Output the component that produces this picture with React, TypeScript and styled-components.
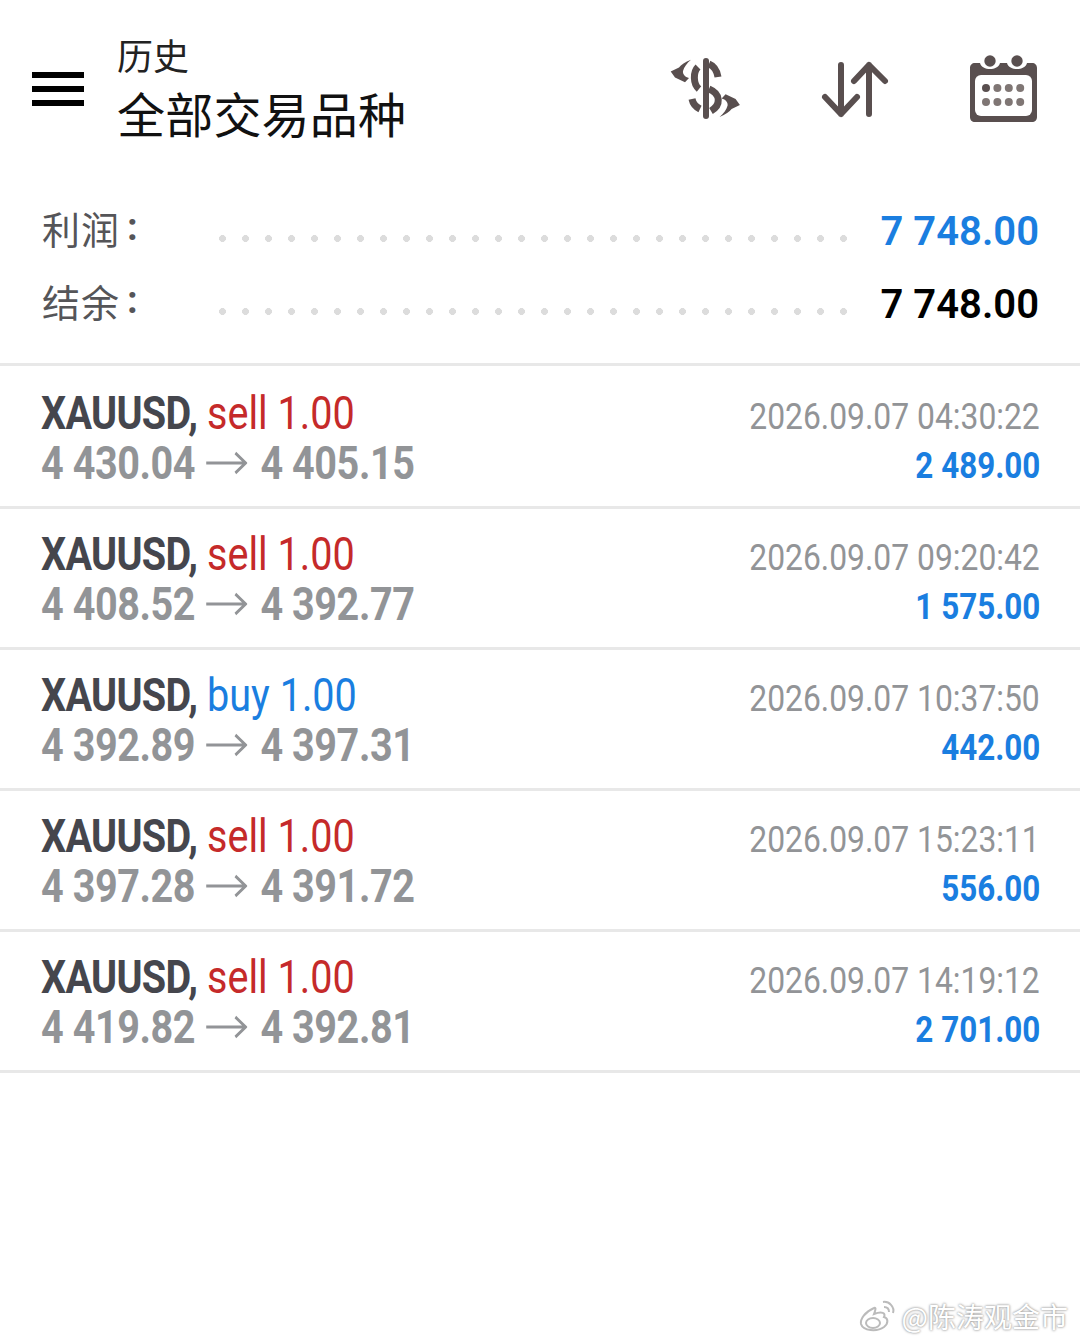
import styled, { createGlobalStyle } from "styled-components"

interface Deal {
    side: "sell" | "buy"
    open: string
    close: string
    time: string
    profit: string
}

const deals: Deal[] = [
    { side: "sell", open: "4 430.04", close: "4 405.15", time: "2026.09.07 04:30:22", profit: "2 489.00" },
    { side: "sell", open: "4 408.52", close: "4 392.77", time: "2026.09.07 09:20:42", profit: "1 575.00" },
    { side: "buy", open: "4 392.89", close: "4 397.31", time: "2026.09.07 10:37:50", profit: "442.00" },
    { side: "sell", open: "4 397.28", close: "4 391.72", time: "2026.09.07 15:23:11", profit: "556.00" },
    { side: "sell", open: "4 419.82", close: "4 392.81", time: "2026.09.07 14:19:12", profit: "2 701.00" },
]

const GlobalStyle = createGlobalStyle`
    html, body {
        margin: 0;
        background: #fff;
    }
    body {
        font-family: Roboto, "Noto Sans CJK SC", sans-serif;
    }
`

const Page = styled.div`
    width: 1080px;
    height: 1342px;
    position: relative;
    overflow: hidden;
    background: #fff;
`

const Header = styled.header`
    height: 180px;
    display: flex;
    align-items: flex-start;
    padding: 33px 42px 0 32px;
    box-sizing: border-box;
`

const Burger = styled.div`
    width: 52px;
    height: 34px;
    margin-top: 39px;
    display: flex;
    flex-direction: column;
    justify-content: space-between;
    flex-shrink: 0;
    span {
        display: block;
        height: 6px;
        background: #000;
    }
`

const Titles = styled.div`
    margin-left: 33px;
    flex: 1;
`

const SmallTitle = styled.div`
    font-family: "Noto Sans CJK SC", sans-serif;
    font-size: 36px;
    line-height: 42px;
    color: #222;
`

const BigTitle = styled.div`
    font-family: "Noto Sans CJK SC", sans-serif;
    font-size: 48px;
    line-height: 60px;
    margin-top: 7px;
    letter-spacing: 0.2px;
    color: #111;
`

const Icons = styled.div`
    display: flex;
    align-items: center;
    margin-top: 22px;
    gap: 78px;
    svg {
        display: block;
    }
`

const Summary = styled.section`
    height: 186px;
    padding-top: 15px;
    box-sizing: border-box;
    border-bottom: 3px solid #e8e8e8;
`

const SummaryRow = styled.div`
    height: 73px;
    display: flex;
    align-items: center;
    padding: 0 41px 0 42px;
`

const SummaryLabel = styled.div`
    width: 177px;
    height: 66px;
    display: flex;
    align-items: center;
    margin-top: -9px;
    font-family: "Noto Sans CJK SC", sans-serif;
    font-size: 38px;
    color: #555558;
    letter-spacing: 1px;
    flex-shrink: 0;
`

const Colon = styled.span`
    font-family: Roboto, sans-serif;
    font-weight: 700;
    margin-left: 7px;
`

const Dots = styled.div`
    width: 630px;
    height: 7px;
    margin-top: 14px;
    background-image: radial-gradient(circle at 3.5px 3.5px, #dcdcdc 3.2px, transparent 3.7px);
    background-size: 23px 7px;
    background-repeat: repeat-x;
`

const SummaryValue = styled.div<{ $blue?: boolean }>`
    flex: 1;
    text-align: right;
    font-size: 40px;
    font-weight: 600;
    white-space: nowrap;
    color: ${({ $blue }) => ($blue ? "#1a7ee0" : "#000")};
`

const Row = styled.div`
    height: 141px;
    box-sizing: border-box;
    border-bottom: 3px solid #e8e8e8;
    padding: 18px 40px 0 41px;
    display: flex;
    justify-content: space-between;

    &:first-of-type {
        height: 143px;
        padding-top: 20px;
    }
`

const Left = styled.div`
    display: flex;
    flex-direction: column;
`

const Right = styled.div`
    display: flex;
    flex-direction: column;
    align-items: flex-end;
`

const Squeezed = styled.div<{ $origin: "left" | "right" }>`
    transform: scaleX(0.86);
    transform-origin: ${({ $origin }) => $origin} center;
    white-space: nowrap;
`

const Line1 = styled(Squeezed)`
    font-size: 46px;
    line-height: 54px;
`

const Symbol = styled.span`
    font-weight: 700;
    letter-spacing: -0.8px;
    color: #45464d;
`

const Side = styled.span<{ $side: "sell" | "buy" }>`
    color: ${({ $side }) => ($side === "sell" ? "#c52a2a" : "#1a7ee0")};
`

const Line2 = styled(Squeezed)`
    font-size: 46px;
    line-height: 46px;
    font-weight: 700;
    letter-spacing: -0.5px;
    color: #929497;
    display: flex;
    align-items: center;
`

const ArrowIcon = styled.svg`
    margin: 0 15px 0 13px;
    flex-shrink: 0;
`

const Time = styled(Squeezed)`
    font-size: 37px;
    line-height: 52px;
    margin-top: 5px;
    color: #929497;
`

const Profit = styled(Squeezed)`
    font-size: 36.5px;
    line-height: 46px;
    margin-top: 0;
    font-weight: 700;
    color: #1a7ee0;
`

const Watermark = styled.div`
    position: absolute;
    right: 12px;
    bottom: 6px;
    display: flex;
    align-items: center;
    gap: 5px;
    font-family: "Noto Sans CJK SC", sans-serif;
    font-size: 28px;
    color: #fff;
    text-shadow: 0 0 2px #999, 0 0 3px #aaa;
`

const ICON = "#594f4f"

const SWOOSH = "M23 2.7C17 5 13 8 11 10.5L2.7 14.5L7 20.5L17 25.3L21 21C17 20 14.5 17 15 14C16 10 19 6 23 2.7Z"

const DollarIcon = () => (
    <svg width="74" height="64" viewBox="0 0 74 64" fill="none">
        <path d="M38 4V59" stroke={ICON} strokeWidth="6" strokeLinecap="round" />
        <path d="M30 10C25 15 25 27 31 32M41 7C46 9 49 14 50 20" stroke={ICON} strokeWidth="7" />
        <path d="M41 32C53 37 53 48 43 54M24 42C25 47 28 50 32 52" stroke={ICON} strokeWidth="7" />
        <path d={SWOOSH} fill={ICON} />
        <path d={SWOOSH} fill={ICON} transform="rotate(180 37.3 31.3)" />
    </svg>
)

const SortIcon = () => (
    <svg width="72" height="58" viewBox="0 0 72 58" fill="none">
        <path d="M21 5V54M5 37L21 54L37 37" stroke={ICON} strokeWidth="6" strokeLinecap="round" strokeLinejoin="round" />
        <path d="M49 54V5M34 21L49 5L65 21" stroke={ICON} strokeWidth="6" strokeLinecap="round" strokeLinejoin="round" />
    </svg>
)

const CalendarIcon = () => (
    <svg width="68" height="68" viewBox="0 0 68 68">
        <circle cx="20" cy="6" r="5.7" fill={ICON} />
        <circle cx="47" cy="6" r="5.7" fill={ICON} />
        <path d="M5 8H10C12 16 28 16 30 8H37C39 16 55 16 57 8H62C65 8 67 10 67 13V62C67 65 65 67 62 67H5C2 67 0 65 0 62V13C0 10 2 8 5 8Z" fill={ICON} />
        <rect x="5" y="20" width="57" height="41" rx="6" fill="#fff" />
        {[0, 1, 2, 3].map((i) => (
            <circle key={`a${i}`} cx={16 + i * 11.4} cy="33" r="4" fill={i === 0 ? ICON : "#7f7674"} />
        ))}
        {[0, 1, 2, 3].map((i) => (
            <circle key={`b${i}`} cx={16 + i * 11.4} cy="47" r="4" fill="#7f7674" />
        ))}
    </svg>
)

const Arrow = () => (
    <ArrowIcon width="48" height="24" viewBox="0 0 48 24" fill="none">
        <path d="M0 12H46M34 2L46 12L34 22" stroke="#929497" strokeWidth="3" />
    </ArrowIcon>
)

const WeiboIcon = () => (
    <svg width="38" height="34" viewBox="0 0 38 34" fill="none" stroke="#bbb" strokeWidth="2">
        <path d="M15 9C6 13 1 20 2 25C4 32 18 33 25 28C30 24 29 19 25 18C27 14 23 12 15 15C17 10 17 8 15 9Z" fill="#fff" />
        <ellipse cx="14" cy="24" rx="7" ry="5" />
        <path d="M24 3C30 2 36 8 34 14M25 8C28 8 30 10 30 13" />
    </svg>
)

const App = () => {
    return (
        <Page>
            <GlobalStyle />
            <Header>
                <Burger>
                    <span />
                    <span />
                    <span />
                </Burger>
                <Titles>
                    <SmallTitle>历史</SmallTitle>
                    <BigTitle>全部交易品种</BigTitle>
                </Titles>
                <Icons>
                    <DollarIcon />
                    <SortIcon />
                    <CalendarIcon />
                </Icons>
            </Header>
            <Summary>
                <SummaryRow>
                    <SummaryLabel>利润<Colon>:</Colon></SummaryLabel>
                    <Dots />
                    <SummaryValue $blue>7 748.00</SummaryValue>
                </SummaryRow>
                <SummaryRow>
                    <SummaryLabel>结余<Colon>:</Colon></SummaryLabel>
                    <Dots />
                    <SummaryValue>7 748.00</SummaryValue>
                </SummaryRow>
            </Summary>
            {deals.map((d) => (
                <Row key={d.time}>
                    <Left>
                        <Line1 $origin="left">
                            <Symbol>XAUUSD,</Symbol> <Side $side={d.side}>{d.side} 1.00</Side>
                        </Line1>
                        <Line2 $origin="left">
                            {d.open}
                            <Arrow />
                            {d.close}
                        </Line2>
                    </Left>
                    <Right>
                        <Time $origin="right">{d.time}</Time>
                        <Profit $origin="right">{d.profit}</Profit>
                    </Right>
                </Row>
            ))}
            <Watermark>
                <WeiboIcon />
                @陈涛观金市
            </Watermark>
        </Page>
    )
}

export default App
